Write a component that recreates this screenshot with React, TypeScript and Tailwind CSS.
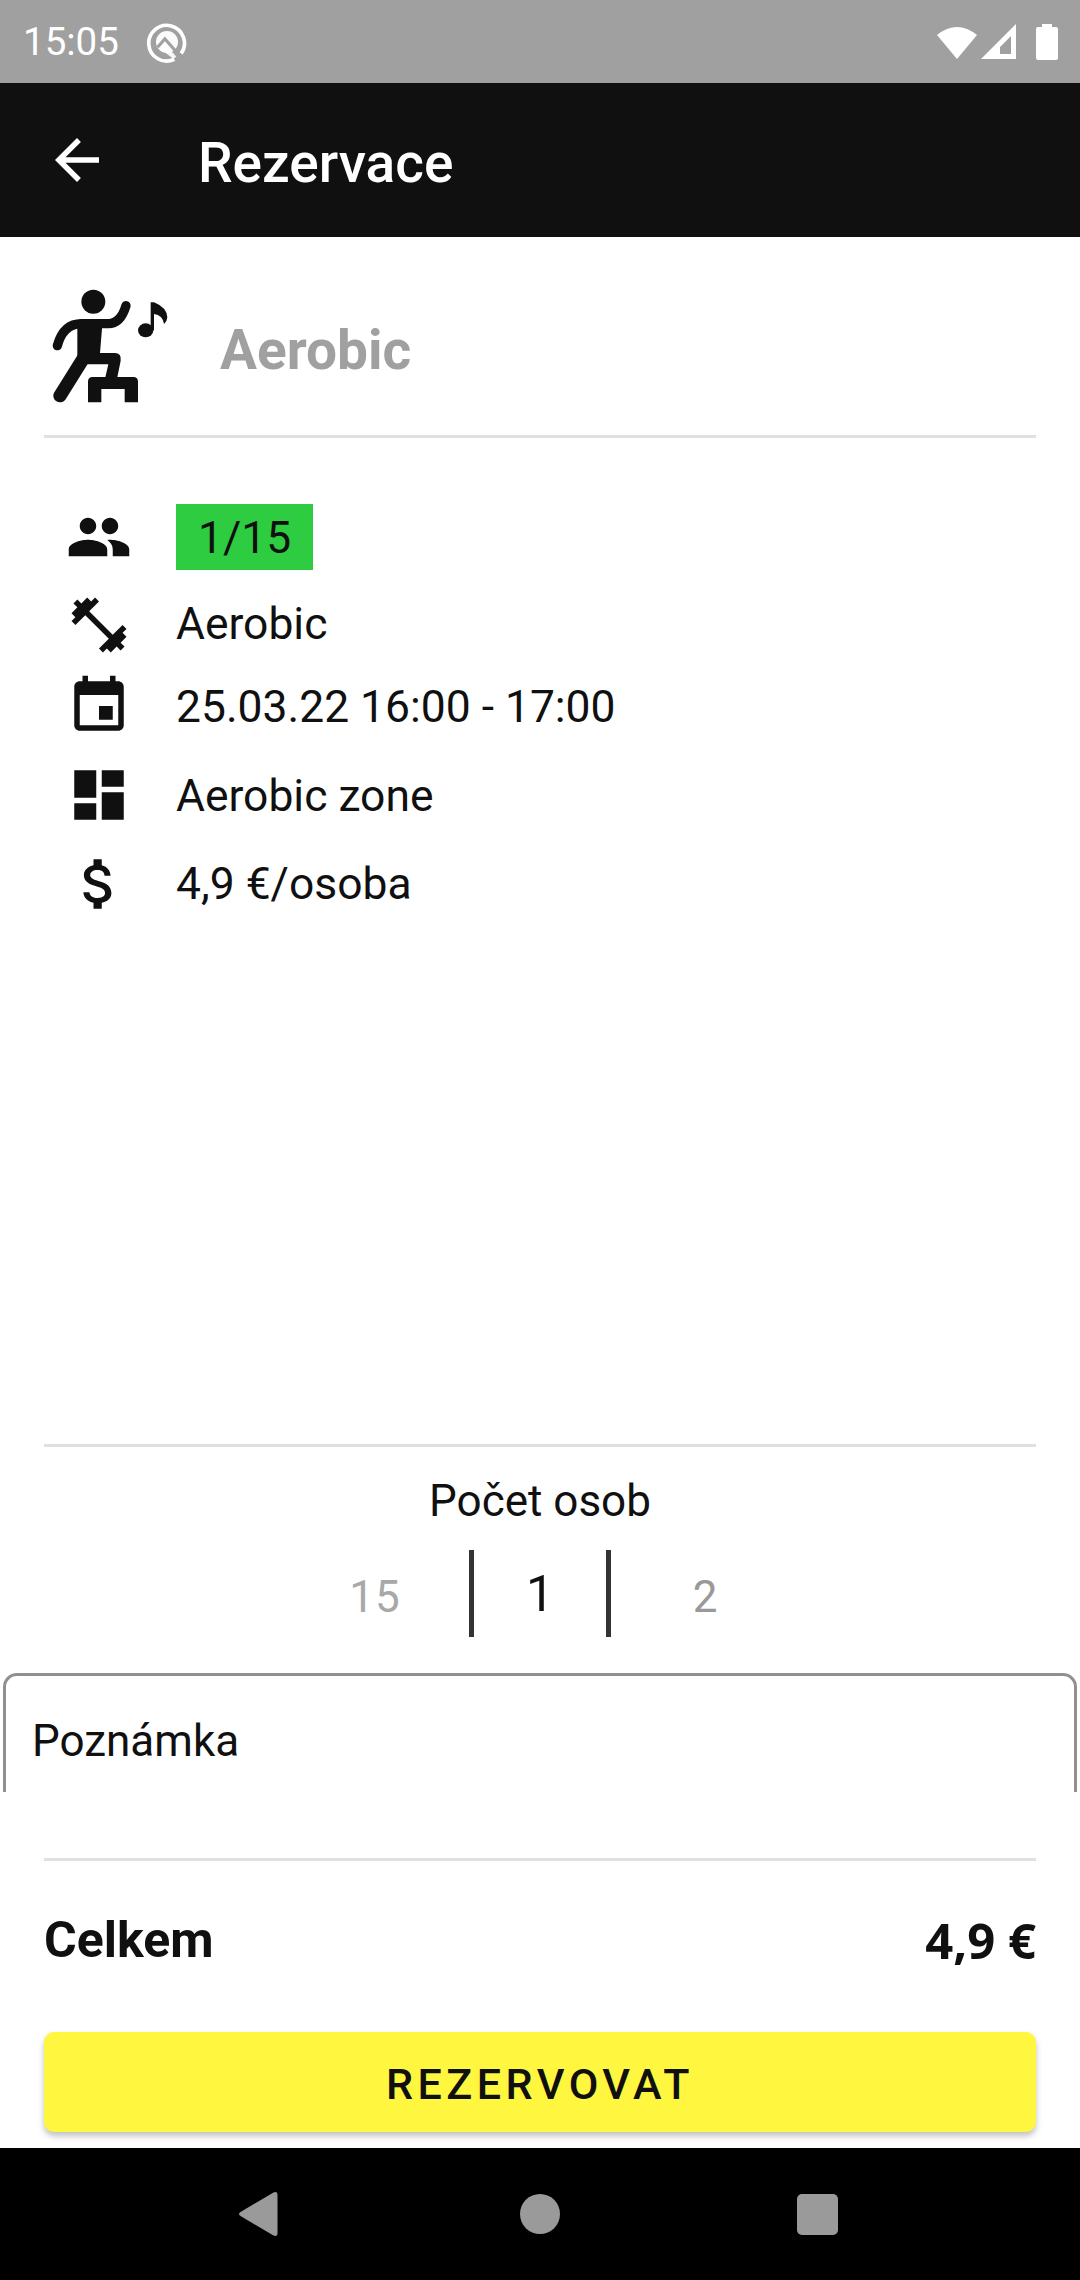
const roboto = "font-['Roboto','Liberation_Sans',sans-serif]";

const MI = ({ d }: { d: string }) => (
  <svg viewBox="0 0 24 24" className="w-[66px] h-[66px] ml-[22px] mr-[44px] shrink-0" fill="#101010">
    <path d={d} />
  </svg>
);

const StepIcon = () => (
  <svg viewBox="120 60 420 390" className="w-[140px] h-[130px] shrink-0 -ml-[4px] mt-[16px]" fill="#101010">
    <circle cx="280" cy="128" r="36" />
    <path d="M245 194H325Q362 194 378 140" fill="none" stroke="#101010" strokeWidth="28" strokeLinecap="round" />
    <path d="M245 194Q190 194 172 260" fill="none" stroke="#101010" strokeWidth="28" strokeLinecap="round" />
    <path d="M232 185H308L300 282H345Q365 282 362 305L352 355H316L325 316H262L232 300Z" />
    <path d="M255 290L180 410" fill="none" stroke="#101010" strokeWidth="40" strokeLinecap="round" />
    <path d="M264 430V368Q264 354 278 354H400Q414 354 414 368V430H374V390H304V430Z" />
    <ellipse cx="437" cy="214" rx="23" ry="21" />
    <path d="M452 214V130H462Q500 145 502 175Q502 185 492 195Q488 168 462 165V214Z" />
  </svg>
);

const Row = ({ d, mt, text, children }: { d: string; mt: string; text?: string; children: React.ReactNode }) => (
  <div className={`flex items-center h-[66px] ${mt}`}>
    <MI d={d} />
    <div className={text}>{children}</div>
  </div>
);

export default function App() {
  return (
    <div className={`flex flex-col w-[1080px] h-[2280px] overflow-hidden bg-white text-[#101010] ${roboto}`}>
      {/* status bar */}
      <div className="flex items-center h-[83px] bg-[#a0a0a0] text-white pl-[23px] pr-[22px] shrink-0">
        <span className="text-[38.5px] leading-none pt-[2px]">15:05</span>
        <svg viewBox="0 0 40 40" className="w-[42px] h-[42px] ml-[27px] mt-[2px]">
          <path d="M27 35.5A17 17 0 1 1 33.5 30" fill="none" stroke="white" strokeWidth="3.5" />
          <circle cx="20" cy="19" r="10.5" fill="white" opacity="0.95" />
          <path d="M11 24L18 16 31 31" fill="none" stroke="#a0a0a0" strokeWidth="3" />
          <path d="M18 21L29 33 26 35 14 26Z" fill="white" opacity="0.9" />
        </svg>
        <div className="flex items-center ml-auto">
          <svg viewBox="0 0 40 34" className="w-[40px] h-[34px]">
            <path d="M0 10Q20 -6 40 10L20 34Z" fill="white" />
          </svg>
          <svg viewBox="0 0 36 36" className="w-[36px] h-[36px] ml-[4px]">
            <path d="M0 35L35 0V35Z M19 30H30V12L19 23Z" fill="white" fillRule="evenodd" />
          </svg>
          <svg viewBox="0 0 22 36" className="w-[22px] h-[36px] ml-[19px]">
            <path d="M6 0H16V3H20Q22 3 22 5V34Q22 36 20 36H2Q0 36 0 34V5Q0 3 2 3H6Z" fill="white" />
          </svg>
        </div>
      </div>

      {/* header */}
      <div className="flex items-center h-[154px] bg-[#101010] text-white pl-[44px] shrink-0">
        <svg viewBox="0 0 24 24" className="w-[66px] h-[66px] shrink-0" fill="white">
          <path d="M20 11H7.83l5.59-5.59L12 4l-8 8 8 8 1.41-1.41L7.83 13H20v-2z" />
        </svg>
        <h1 className="ml-[88px] text-[55px] font-medium leading-none pt-[7px]">Rezervace</h1>
      </div>

      <div className="flex flex-col flex-1 px-[44px] min-h-0">
        <div className="flex items-center h-[198px] shrink-0">
          <StepIcon />
          <span className="ml-[40px] text-[55px] font-bold text-[#a0a0a0] leading-none pt-[28px]">Aerobic</span>
        </div>
        <div className="h-[3px] bg-[#e0e0e0] shrink-0" />

        {/* detail */}
        <div className="flex flex-col pt-[66px] text-[44.4px] leading-none">
          <Row mt="mt-0" d="M16 11c1.66 0 2.99-1.34 2.99-3S17.66 5 16 5c-1.66 0-3 1.34-3 3s1.34 3 3 3zm-8 0c1.66 0 2.99-1.34 2.99-3S9.66 5 8 5C6.34 5 5 6.34 5 8s1.34 3 3 3zm0 2c-2.33 0-7 1.17-7 3.5V19h14v-2.5c0-2.33-4.67-3.5-7-3.5zm8 0c-.29 0-.62.02-.97.05 1.16.84 1.97 1.97 1.97 3.45V19h6v-2.5c0-2.33-4.67-3.5-7-3.5z">
            <span className="flex items-center h-[66px] px-[22px] pt-[3px] bg-[#2ecc40]">1/15</span>
          </Row>
          <Row mt="mt-[22px]" text="-mt-[2px]" d="M20.57 14.86L22 13.43 20.57 12 17 15.57 8.43 7 12 3.43 10.57 2 9.14 3.43 7.71 2 5.57 4.14 4.14 2.71 2.71 4.14l1.43 1.43L2 7.71l1.43 1.43L2 10.57 3.43 12 7 8.43 15.57 17 12 20.57 13.43 22l1.43-1.43L16.29 22l2.14-2.14 1.43 1.43 1.43-1.43-1.43-1.43L22 16.29z">
            Aerobic
          </Row>
          <Row mt="mt-[15px]" text="mt-[2px]" d="M17 12h-5v5h5v-5zM16 1v2H8V1H6v2H5c-1.11 0-1.99.9-1.99 2L3 19c0 1.1.89 2 2 2h14c1.1 0 2-.9 2-2V5c0-1.1-.9-2-2-2h-1V1h-2zm3 18H5V8h14v11z">
            25.03.22 16:00 - 17:00
          </Row>
          <Row mt="mt-[23px]" text="mt-[2px]" d="M3 13h8V3H3v10zm0 8h8v-6H3v6zm10 0h8V11h-8v10zm0-18v6h8V3h-8z">
            Aerobic zone
          </Row>
          <Row mt="mt-[23px]" d="M11.8 10.9c-2.27-.59-3-1.2-3-2.15 0-1.09 1.01-1.85 2.7-1.85 1.78 0 2.44.85 2.5 2.1h2.21c-.07-1.72-1.12-3.3-3.21-3.81V3h-3v2.16c-1.94.42-3.5 1.68-3.5 3.61 0 2.31 1.91 3.46 4.7 4.13 2.5.6 3 1.48 3 2.41 0 .69-.49 1.79-2.7 1.79-2.06 0-2.87-.92-2.98-2.1h-2.2c.12 2.19 1.76 3.42 3.68 3.83V21h3v-2.15c1.95-.37 3.5-1.5 3.5-3.55 0-2.84-2.43-3.81-4.7-4.4z">
            4,9 €/osoba
          </Row>
        </div>

        {/* bottom */}
        <div className="mt-auto flex flex-col">
          <div className="h-[3px] bg-[#e0e0e0]" />
          <div className="flex justify-center items-center h-[103px] text-[44px] leading-none pt-[4px]">Počet osob</div>
          <div className="flex justify-center h-[87px]">
            <div className="flex items-center justify-center w-[188px] text-[44px] text-[#a8a8a8] tracking-[1px] pt-[6px]">15</div>
            <div className="flex items-center justify-center w-[142px] border-x-[5px] border-[#333333] text-[50px] leading-none">1</div>
            <div className="flex items-center justify-center w-[188px] text-[44px] text-[#999999] pt-[6px]">2</div>
          </div>
          <div className="-mx-[41px] mt-[36px] h-[119px] overflow-hidden">
            <div className="h-[200px] border-[3px] border-[#909090] rounded-[14px] pl-[26px] pt-[43px] text-[44px] leading-none">
              Poznámka
            </div>
          </div>
          <div className="h-[3px] bg-[#e0e0e0] mt-[66px]" />
          <div className="flex items-center justify-between h-[171px] pb-[13px] font-bold text-[50px] leading-none">
            <span>Celkem</span>
            <span className="font-['Open_Sans',sans-serif] text-[49px]">4,9 €</span>
          </div>
          <button className="h-[100px] bg-[#fff73f] rounded-[10px] shadow-[0_4px_6px_rgba(0,0,0,0.25)] text-[43px] font-medium tracking-[4.5px] pt-[4px]">
            REZERVOVAT
          </button>
          <div className="h-[16px]" />
        </div>
      </div>

      {/* nav bar */}
      <div className="relative flex items-center justify-center h-[132px] bg-black shrink-0">
        <div className="flex items-center w-[600px] mr-[4px] justify-between">
          <svg viewBox="0 0 40 46" className="w-[41px] h-[46px]">
            <path d="M2 21L35 1.5Q39 0 39 4V42Q39 46 35 44.5L2 25Q-1 23 2 21Z" fill="#9a9a9a" />
          </svg>
          <div className="w-[40px] h-[40px] ml-[4px] rounded-full bg-[#9a9a9a]" />
          <div className="w-[41px] h-[41px] rounded-[5px] bg-[#9a9a9a]" />
        </div>
      </div>
    </div>
  );
}
